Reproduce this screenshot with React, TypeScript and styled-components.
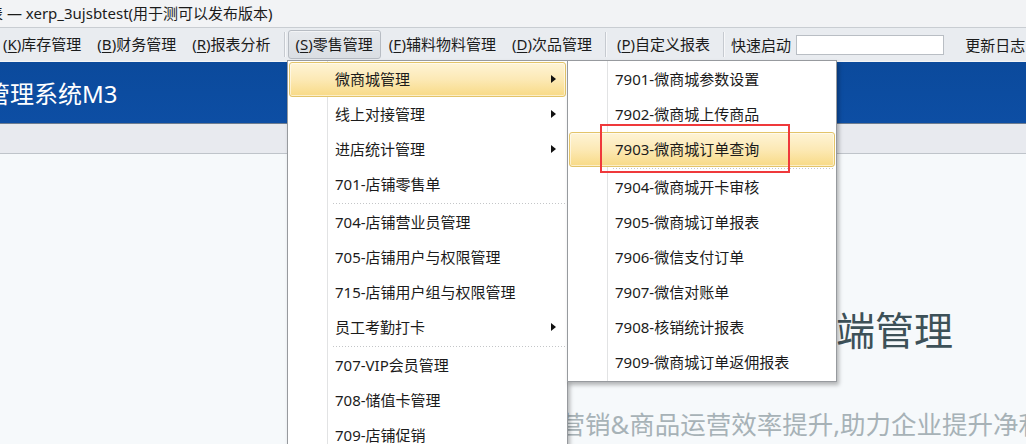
import React from 'react';
import styled, { createGlobalStyle, css } from 'styled-components';

const GlobalStyle = createGlobalStyle`
    html, body {
        margin: 0;
        padding: 0;
        width: 1026px;
        height: 444px;
        overflow: hidden;
        background: #f6f9fb;
    }
    body {
        font-family: "Noto Sans", "Noto Sans CJK SC", sans-serif;
        color: #1b1b1b;
    }
`;

const Window = styled.div`
    position: relative;
    width: 1026px;
    height: 444px;
    display: flex;
    flex-direction: column;
    overflow: hidden;
`;

const TitleBar = styled.div`
    height: 27px;
    flex-shrink: 0;
    display: flex;
    align-items: center;
    background: #f2f3f5;
    border-bottom: 1px solid #c9cdd2;
    font-size: 15px;
    line-height: 1;
    white-space: nowrap;
`;

const TitleText = styled.span`
    margin-left: -12px;
`;

const MenuBar = styled.div`
    height: 33px;
    flex-shrink: 0;
    display: flex;
    align-items: center;
    background: #e9ecf0;
    border-bottom: 1px solid #f4f5f7;
    font-size: 15px;
    white-space: nowrap;
`;

const MenuStrip = styled.div`
    display: flex;
    align-items: center;
    margin-left: -5px;
`;

const MenuBarItem = styled.div<{ $pressed?: boolean }>`
    height: 27px;
    line-height: 27px;
    padding: 0 7px;
    border: 1px solid transparent;
    border-radius: 3px;

    ${props =>
        props.$pressed &&
        css`
            background: linear-gradient(to bottom, #e6e9ed, #dadee3);
            border-color: #b7bcc3;
            box-shadow: inset 0 1px 0 rgba(255, 255, 255, 0.5);
        `}
`;

const AccessKey = styled.span`
    text-decoration: underline;
    text-underline-offset: 2px;
`;

const BarSeparator = styled.div`
    width: 1px;
    height: 25px;
    margin: 0 3px 0 5px;
    background: #c6cad0;
    box-shadow: 1px 0 0 #f7f8fa;
`;

const QuickLabel = styled.span`
    margin-left: 4px;
`;

const QuickInput = styled.div`
    width: 146px;
    height: 18px;
    margin-left: 5px;
    background: #fff;
    border: 1px solid #b9bec4;
`;

const LogLink = styled.span`
    margin-left: 21px;
`;

const Banner = styled.div`
    height: 61px;
    flex-shrink: 0;
    display: flex;
    align-items: center;
    background: linear-gradient(to bottom, #0b4a9c, #0d4ea4);
    border-bottom: 1px solid #6e7d90;
    color: #fff;
    font-size: 24px;
    white-space: nowrap;
`;

const BannerTitle = styled.span`
    margin-left: -14px;
`;

const TabStrip = styled.div`
    height: 29px;
    flex-shrink: 0;
    background: #e8eaef;
    border-bottom: 1px solid #bfc4ca;
`;

const Content = styled.div`
    flex: 1;
    display: flex;
    flex-direction: column;
    padding-top: 156px;
    background: #f6f9fb;
    white-space: nowrap;
`;

const HeroTitle = styled.div`
    margin-left: 797px;
    font-size: 39px;
    line-height: 39px;
    color: #3d5158;
`;

const HeroSubtitle = styled.div`
    margin-left: 483px;
    margin-top: 63px;
    font-size: 25.5px;
    line-height: 25px;
    color: #a7b2b7;
`;

const Dropdown = styled.div<{ $left: number; $width: number }>`
    position: absolute;
    top: 60px;
    left: ${props => props.$left}px;
    width: ${props => props.$width}px;
    box-sizing: border-box;
    padding: 1px;
    background: #fff;
    border: 1px solid #979a9e;
    box-shadow: 2px 3px 4px rgba(0, 0, 0, 0.28);
    font-size: 15px;
    white-space: nowrap;
    z-index: 5;

    &::before {
        content: '';
        position: absolute;
        top: 0;
        bottom: 0;
        left: 39px;
        width: 1px;
        background: #e2e3e4;
    }
`;

const MenuRow = styled.div<{ $active?: boolean }>`
    position: relative;
    z-index: 1;
    height: 35px;
    box-sizing: border-box;
    display: flex;
    align-items: center;
    padding: 0 0 2px 45px;
    border: 1px solid transparent;
    border-radius: 3px;

    ${props =>
        props.$active &&
        css`
            background: linear-gradient(to bottom, #fef4d6 0%, #fce9b5 50%, #f8da86 100%);
            border-color: #e3c469;
            box-shadow: inset 0 0 0 1px rgba(255, 255, 255, 0.55);
        `}
`;

const SubArrow = styled.span`
    margin-left: auto;
    margin-right: 9px;
    width: 0;
    height: 0;
    border-left: 5px solid #111;
    border-top: 4px solid transparent;
    border-bottom: 4px solid transparent;
`;

const MenuSeparator = styled.div`
    height: 3px;
    margin-left: 44px;
    background: linear-gradient(to right, #c4c6c8 50%, transparent 50%) 0 1px / 3px 1px repeat-x;
`;

const Annotation = styled.div`
    position: absolute;
    top: 124px;
    left: 600px;
    width: 190px;
    height: 49px;
    box-sizing: border-box;
    border: 2px solid #ef393b;
    z-index: 6;
`;

type MenuEntry = { label: string; sub?: boolean; active?: boolean } | 'sep';

const retailMenu: MenuEntry[] = [
    { label: '微商城管理', sub: true, active: true },
    { label: '线上对接管理', sub: true },
    { label: '进店统计管理', sub: true },
    { label: '701-店铺零售单' },
    'sep',
    { label: '704-店铺营业员管理' },
    { label: '705-店铺用户与权限管理' },
    { label: '715-店铺用户组与权限管理' },
    { label: '员工考勤打卡', sub: true },
    'sep',
    { label: '707-VIP会员管理' },
    { label: '708-储值卡管理' },
    { label: '709-店铺促销' },
];

const mallMenu: MenuEntry[] = [
    { label: '7901-微商城参数设置' },
    { label: '7902-微商城上传商品' },
    { label: '7903-微商城订单查询', active: true },
    'sep',
    { label: '7904-微商城开卡审核' },
    { label: '7905-微商城订单报表' },
    { label: '7906-微信支付订单' },
    { label: '7907-微信对账单' },
    { label: '7908-核销统计报表' },
    { label: '7909-微商城订单返佣报表' },
];

const barItems = [
    { key: 'K', label: '库存管理' },
    { key: 'B', label: '财务管理' },
    { key: 'R', label: '报表分析' },
    'sep',
    { key: 'S', label: '零售管理', pressed: true },
    { key: 'F', label: '辅料物料管理' },
    { key: 'D', label: '次品管理' },
    'sep',
    { key: 'P', label: '自定义报表' },
    'sep',
] as const;

const MenuList = ({ entries, left, width }: { entries: MenuEntry[]; left: number; width: number }) => (
    <Dropdown $left={left} $width={width}>
        {entries.map((entry, i) =>
            entry === 'sep' ? (
                <MenuSeparator key={i} />
            ) : (
                <MenuRow key={i} $active={entry.active}>
                    {entry.label}
                    {entry.sub && <SubArrow />}
                </MenuRow>
            ),
        )}
    </Dropdown>
);

const App = () => {
    return (
        <Window>
            <GlobalStyle />
            <TitleBar>
                <TitleText>表 — xerp_3ujsbtest(用于测可以发布版本)</TitleText>
            </TitleBar>
            <MenuBar>
                <MenuStrip>
                    {barItems.map((item, i) =>
                        item === 'sep' ? (
                            <BarSeparator key={i} />
                        ) : (
                            <MenuBarItem key={i} $pressed={'pressed' in item}>
                                (<AccessKey>{item.key}</AccessKey>){item.label}
                            </MenuBarItem>
                        ),
                    )}
                    <QuickLabel>快速启动</QuickLabel>
                    <QuickInput />
                    <LogLink>更新日志</LogLink>
                </MenuStrip>
            </MenuBar>
            <Banner>
                <BannerTitle>管理系统M3</BannerTitle>
            </Banner>
            <TabStrip />
            <Content>
                <HeroTitle>终端管理</HeroTitle>
                <HeroSubtitle>全渠道营销&amp;商品运营效率提升,助力企业提升净利润</HeroSubtitle>
            </Content>
            <MenuList entries={retailMenu} left={287} width={281} />
            <MenuList entries={mallMenu} left={567} width={270} />
            <Annotation />
        </Window>
    );
};

export default App;
